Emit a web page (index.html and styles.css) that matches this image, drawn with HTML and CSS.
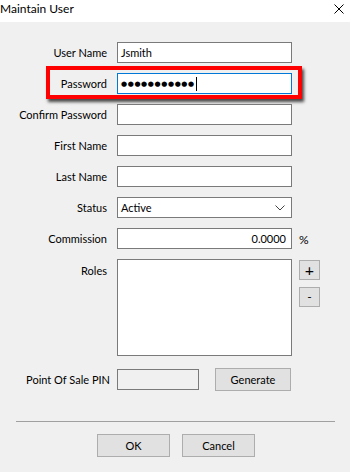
FILE: index.html
```html
<!DOCTYPE html>
<html lang="en">
<head>
    <meta charset="UTF-8">
    <meta name="viewport" content="width=device-width, initial-scale=1.0">
    <title>Maintain User</title>
    <link rel="stylesheet" href="styles.css">
</head>
<body>
    <div class="window">
        <div class="titlebar">
            <span class="title">Maintain User</span>
            <svg class="close" width="10" height="10" viewBox="0 0 10 10">
                <path d="M0.5 0.5 L9.5 9.5 M9.5 0.5 L0.5 9.5" stroke="#000" stroke-width="1" fill="none"/>
            </svg>
        </div>

        <div class="form">
            <div class="row">
                <label class="label">User Name</label>
                <div class="field">Jsmith</div>
            </div>
            <div class="row highlight">
                <label class="label">Password</label>
                <div class="field focused"><span class="dots">●●●●●●●●●●●</span><span class="caret"></span></div>
            </div>
            <div class="row">
                <label class="label">Confirm Password</label>
                <div class="field"></div>
            </div>
            <div class="row">
                <label class="label">First Name</label>
                <div class="field"></div>
            </div>
            <div class="row">
                <label class="label">Last Name</label>
                <div class="field"></div>
            </div>
            <div class="row">
                <label class="label">Status</label>
                <div class="field select">
                    <span>Active</span>
                    <svg width="10" height="6" viewBox="0 0 10 6">
                        <path d="M0.5 0.5 L5 5 L9.5 0.5" stroke="#444" stroke-width="1" fill="none"/>
                    </svg>
                </div>
            </div>
            <div class="row">
                <label class="label">Commission</label>
                <div class="field number">0.0000</div>
                <span class="unit">%</span>
            </div>
            <div class="row roles-row">
                <label class="label">Roles</label>
                <div class="field list"></div>
                <div class="side-buttons">
                    <button class="small-button">+</button>
                    <button class="small-button">-</button>
                </div>
            </div>
            <div class="row pin-row">
                <label class="label pin-label">Point Of Sale PIN</label>
                <div class="field pin"></div>
                <button class="button generate">Generate</button>
            </div>
        </div>

        <div class="separator"></div>

        <div class="actions">
            <button class="button">OK</button>
            <button class="button">Cancel</button>
        </div>
    </div>
</body>
</html>
```

FILE: styles.css
```css
body {
    margin: 0;
    padding: 0;
    background-color: #f0f0f0;
    font-family: Lato, "Noto Sans", sans-serif;
    font-size: 11px;
    color: #000;
}

.window {
    width: 350px;
    height: 472px;
    overflow: hidden;
}

.titlebar {
    height: 22px;
    background-color: #fff;
    display: flex;
    align-items: center;
    justify-content: space-between;
    padding-right: 6px;
}

.title {
    font-size: 12px;
    line-height: 16px;
    margin-top: -4px;
}

.close {
    margin-top: -4px;
}

.form {
    padding-top: 20px;
}

.row {
    display: flex;
    align-items: center;
    height: 21px;
    margin-bottom: 10px;
    position: relative;
}

.label {
    width: 107px;
    margin-right: 10px;
    text-align: right;
    white-space: nowrap;
    line-height: 16px;
}

.field {
    width: 175px;
    height: 21px;
    box-sizing: border-box;
    background-color: #fff;
    border: 1px solid #7a7a7a;
    padding: 0 3px;
    display: flex;
    align-items: center;
    line-height: 16px;
}

.field.focused {
    border-color: #0078d7;
}

.dots {
    font-family: "DejaVu Sans", sans-serif;
    font-size: 7px;
    letter-spacing: 0.6px;
}

.caret {
    width: 1px;
    height: 14px;
    background-color: #000;
    margin-left: 1px;
}

.highlight::before {
    content: "";
    position: absolute;
    left: 46px;
    top: -7px;
    width: 248px;
    height: 25px;
    border: 4px solid #ff0000;
    box-shadow: 2px 3px 3px rgba(0, 0, 0, 0.7);
}

.select {
    justify-content: space-between;
    padding-right: 6px;
}

.number {
    justify-content: flex-end;
    padding-right: 5px;
}

.unit {
    margin-left: 7px;
    margin-top: 2px;
    font-size: 12px;
}

.roles-row {
    align-items: flex-start;
    height: 97px;
    margin-bottom: 12px;
}

.roles-row .label {
    margin-top: 4px;
}

.list {
    height: 97px;
}

.side-buttons {
    display: flex;
    flex-direction: column;
    gap: 7px;
    margin-left: 7px;
    margin-top: 1px;
}

.small-button {
    width: 21px;
    height: 20px;
    padding: 0;
    background-color: #e1e1e1;
    border: 1px solid #adadad;
    font-family: inherit;
    font-size: 16px;
    line-height: 16px;
    color: #000;
}

.small-button + .small-button {
    font-size: 12px;
}

.pin-row {
    height: 23px;
}

.pin-label {
    margin-right: 7px;
    width: 110px;
}

.pin {
    width: 82px;
    background-color: #f0f0f0;
}

.button {
    width: 73px;
    height: 23px;
    padding: 0;
    background-color: #e1e1e1;
    border: 1px solid #adadad;
    font-family: inherit;
    font-size: 11px;
    color: #000;
}

.generate {
    width: 76px;
    margin-left: 16px;
}

.separator {
    margin: 30px 15px 0 16px;
    height: 1px;
    background-color: #a0a0a0;
}

.actions {
    display: flex;
    justify-content: center;
    gap: 12px;
    padding-top: 12px;
    padding-left: 2px;
}
```
